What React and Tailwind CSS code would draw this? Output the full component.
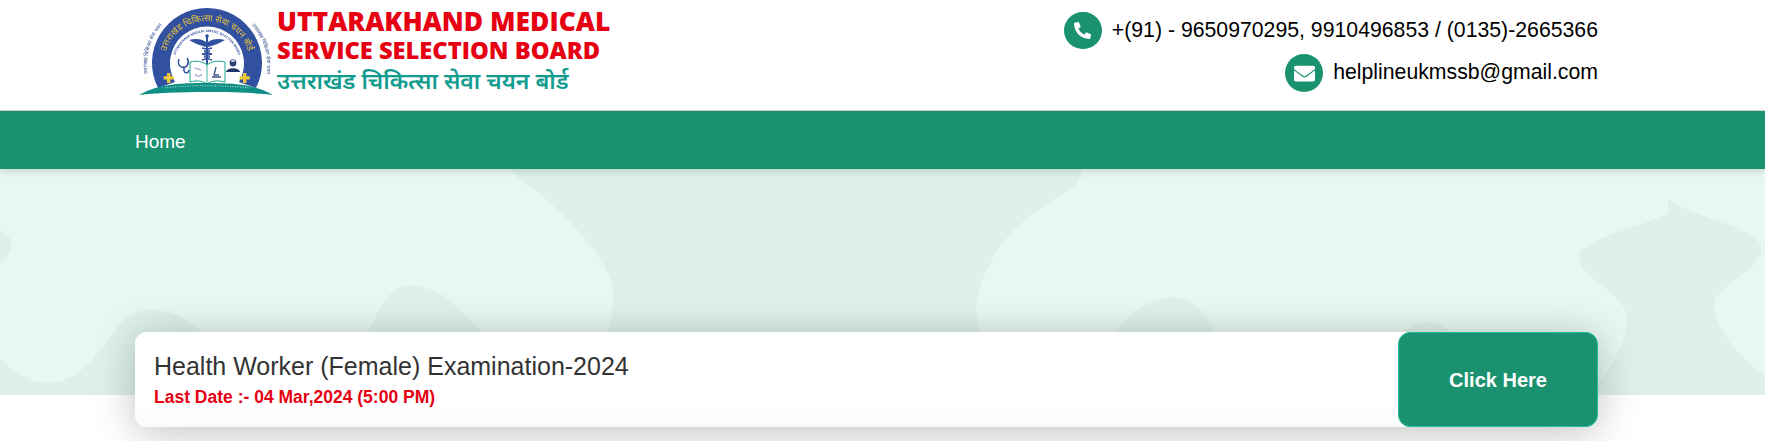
import React from 'react';
import { FaPhoneAlt, FaEnvelope } from 'react-icons/fa';

const RING = 'उत्तराखंड चिकित्सा सेवा चयन बोर्ड';
const FONT = { fontFamily: '"Open Sans", "Noto Sans", sans-serif' };

// emblem of the board, viewBox uses page pixels so it lines up with the header
const Emblem = () => (
  <svg viewBox="139 4 135 92" className="w-[135px] h-[92px] shrink-0 blur-[0.3px]">
    <defs>
      <path id="ringGold" d="M167 80 A43 43 0 1 1 247 80" />
      <path id="ringLeft" d="M150 84 A60 60 0 0 1 170 18" />
      <path id="ringRight" d="M244 18 A60 60 0 0 1 264 84" />
      <path id="ringInner" d="M175 73 A33 33 0 1 1 239 73" />
    </defs>
    <path d="M158 88 A55 55 0 1 1 256 88 L239 82 A37 37 0 1 0 175 82 Z" fill="#31509f" />
    <text fontSize="9" fill="#e8c33c" style={FONT}>
      <textPath href="#ringGold" startOffset="50%" textAnchor="middle">{RING}</textPath>
    </text>
    <text fontSize="5" fill="#2f4d8c" style={FONT}>
      <textPath href="#ringLeft" startOffset="50%" textAnchor="middle">उत्तराखंड चिकित्सा सेवा चयन</textPath>
    </text>
    <text fontSize="5" fill="#2f4d8c" style={FONT}>
      <textPath href="#ringRight" startOffset="50%" textAnchor="middle">उत्तराखंड चिकित्सा सेवा चयन</textPath>
    </text>
    <text fontSize="3.2" fontWeight="700" fill="#31509f" style={FONT}>
      <textPath href="#ringInner" startOffset="50%" textAnchor="middle">UTTARAKHAND MEDICAL SERVICE SELECTION BOARD</textPath>
    </text>
    {/* caduceus */}
    <path d="M207 35 V64" stroke="#31509f" strokeWidth="2" />
    <circle cx="207" cy="36" r="1.8" fill="#31509f" />
    <path d="M189 40 C196 38 202 39 206 42 V47 C199 45 194 43 189 40 Z M225 40 C218 38 212 39 208 42 V47 C215 45 220 43 225 40 Z" fill="#31509f" />
    <path d="M202 48 C212 50 212 52 202 54 C212 56 212 58 202 60 M212 48 C202 50 202 52 212 54 C202 56 202 58 212 60" stroke="#31509f" strokeWidth="1.4" fill="none" />
    {/* stethoscope */}
    <path d="M179 59 C177 65 181 68 184 67 M187 58 C190 62 187 68 184 67 M184 67 V71 C185 74 189 73 189 70" stroke="#31509f" strokeWidth="1.5" fill="none" />
    {/* nurse */}
    <circle cx="233" cy="63" r="3.4" fill="#2b3f78" />
    <path d="M226 72 C227 67 239 67 240 72 Z" fill="#24356a" />
    <path d="M231 60 h4 v2 h-4 Z" fill="#ffffff" stroke="#24356a" strokeWidth="0.5" />
    {/* book */}
    <path d="M190 62 C197 60 203 62 207 65 C211 62 217 60 225 62 V82 C217 80 211 81 207 84 C203 81 197 80 190 82 Z" fill="#ffffff" stroke="#18a38d" strokeWidth="1" />
    <path d="M207 65 V84" stroke="#18a38d" strokeWidth="0.8" />
    <path d="M195 68 L201 70 M195 74 C197 77 200 77 202 74" stroke="#8a9bbf" strokeWidth="1.2" fill="none" />
    <path d="M216 67 L214 75 H219 M212 77 H221" stroke="#3d5688" strokeWidth="1.4" fill="none" />
    {/* gold crosses */}
    <path d="M167 73 h3.4 v3.2 h3.4 v3.4 h-3.4 v3.4 h-3.4 v-3.4 h-3.4 v-3.4 h3.4 Z" fill="#eec83a" />
    <path d="M243 73 h3.4 v3.2 h3.4 v3.4 h-3.4 v3.4 h-3.4 v-3.4 h-3.4 v-3.4 h3.4 Z" fill="#eec83a" />
    {/* base */}
    <path d="M139 95 C160 83 185 83 207 83 C230 83 255 84 273 95 C245 91 170 91 139 95 Z" fill="#128f85" />
    <path d="M165 88 C185 85 225 85 250 88" stroke="#bfe5dc" strokeWidth="1" strokeDasharray="1 1.5" fill="none" />
  </svg>
);

// background drawing of the hero band
const HeroShapes = () => (
  <svg viewBox="0 169 1765 226" preserveAspectRatio="none" className="absolute inset-0 w-full h-full">
    <path d="M511 169 C520 184 530 186 539 193 C568 218 600 250 612 283 C618 320 600 345 590 395 H1000 C985 350 972 320 978 295 C985 265 1005 235 1025 220 C1050 198 1082 190 1082 169 Z" fill="#ddf1e8" />
    <path d="M0 358 C15 375 35 384 50 383 C80 382 100 350 112 335 C125 315 135 310 152 310 C175 310 195 322 208 340 H365 C378 310 390 285 410 285 C430 287 445 295 455 305 L489 340 H1112 C1125 315 1150 297 1174 297 C1195 300 1208 315 1219 340 H1399 C1405 328 1415 322 1427 322 C1440 322 1450 328 1455 340 H1400 V395 H0 Z" fill="#ddf1e8" />
    <path d="M0 230 C8 233 12 240 11 247 C10 254 5 259 0 263 Z" fill="#ddf1e8" />
    <path d="M1668 198 C1690 218 1765 228 1761 250 C1758 275 1714 285 1714 305 C1716 330 1740 360 1765 375 V395 H1590 C1605 375 1628 345 1627 318 C1625 290 1579 280 1579 257 C1580 238 1650 225 1668 213 Z" fill="#ddf1e8" />
  </svg>
);

export default function App() {
  return (
    <div className="bg-white min-h-[441px] overflow-hidden" style={{ fontFamily: '"Liberation Sans", Arial, sans-serif' }}>
      {/* Header */}
      <header className="h-[111px] border-b border-[#d5d5d5] pl-[135px] pr-[167px] flex justify-between">
        <div className="flex items-start pt-[4px]">
          <div className="pl-[4px]"><Emblem /></div>
          <div className="pl-[3px] font-['Open_Sans','Noto_Sans',sans-serif] font-extrabold leading-none whitespace-nowrap">
            <div className="text-[#e60012] text-[26.4px] leading-[34px]">UTTARAKHAND MEDICAL</div>
            <div className="text-[#e60012] text-[23.7px] leading-[24px]">SERVICE SELECTION BOARD</div>
            <div className="text-[#129c90] text-[23px] leading-[30px] pt-[3px] font-semibold">{RING}</div>
          </div>
        </div>
        <div className="flex flex-col items-end gap-[5px] pt-[12px] text-[21.25px] text-black">
          <div className="flex items-center gap-[10px] h-[37px]">
            <span className="w-[38px] h-[37px] rounded-full bg-[#1a9270] flex items-center justify-center text-white text-[17px]"><FaPhoneAlt /></span>
            <span>+(91) - 9650970295, 9910496853 / (0135)-2665366</span>
          </div>
          <div className="flex items-center gap-[10px] h-[38px]">
            <span className="w-[38px] h-[38px] rounded-full bg-[#1a9270] flex items-center justify-center text-white text-[21px]"><FaEnvelope /></span>
            <span>helplineukmssb@gmail.com</span>
          </div>
        </div>
      </header>

      {/* Nav */}
      <nav className="relative z-10 h-[58px] bg-[#1a9270] pl-[135px] pt-[4px] flex items-center shadow-[0_2px_8px_rgba(0,0,0,0.15)]">
        <a className="text-white text-[19px]">Home</a>
      </nav>

      {/* Hero */}
      <section className="relative h-[226px] bg-[#e6f8f0]">
        <HeroShapes />
      </section>

      {/* Notice card */}
      <div className="relative -mt-[63px] ml-[135px] mr-[167px] h-[95px] flex bg-linear-to-b from-white from-80% to-[#fafafa] rounded-[12px] shadow-[0_5px_40px_rgba(0,0,0,0.25)]">
        <div className="flex-1 pl-[19px] pt-[18px]">
          <h2 className="text-[25px] leading-[32px] text-[#333]">Health Worker (Female) Examination-2024</h2>
          <p className="text-[17.5px] leading-[24px] pt-[3px] font-bold text-[#e60012]">Last Date :- 04 Mar,2024 (5:00 PM)</p>
        </div>
        <a className="w-[200px] pt-[1px] rounded-[12px] bg-[#1a9270] border border-[#20bfa5] flex items-center justify-center text-white font-bold text-[20px]">Click Here</a>
      </div>
    </div>
  );
}
